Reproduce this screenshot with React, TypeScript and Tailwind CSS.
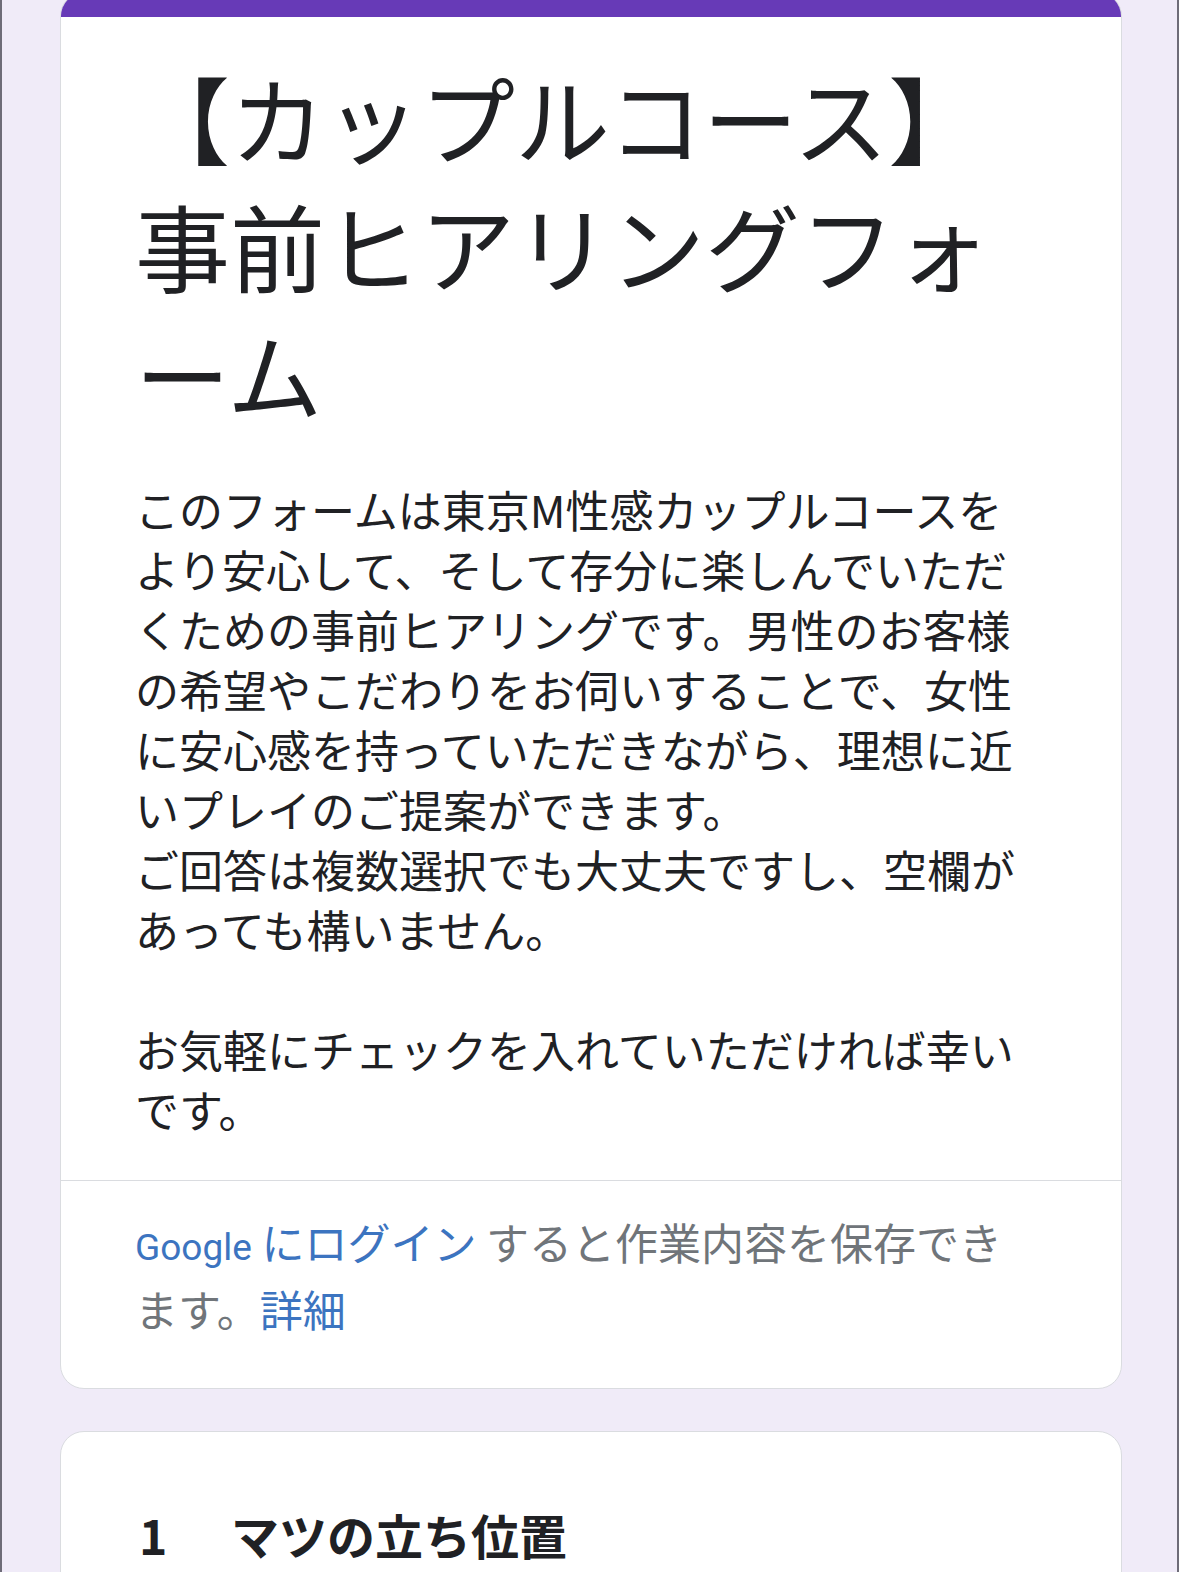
const DESCRIPTION = [
  'このフォームは東京M性感カップルコースをより安心して、そして存分に楽しんでいただくための事前ヒアリングです。男性のお客様の希望やこだわりをお伺いすることで、女性に安心感を持っていただきながら、理想に近いプレイのご提案ができます。',
  'ご回答は複数選択でも大丈夫ですし、空欄があっても構いません。',
];

export default function App() {
  return (
    <div className="min-h-screen w-full bg-[#f0ebf8] border-x-2 border-[#6e6c78] font-['Noto_Sans_CJK_JP','Noto_Sans',sans-serif] text-[#202124]">
      <div className="flex flex-col gap-[42px] pl-[58px] pr-[55px] pb-10">
        {/* Header card */}
        <div className="-mt-[8px] bg-white rounded-[24px] border border-[#dadce0] overflow-hidden">
          <div className="h-[24px] bg-[#673ab7]" />
          <div className="pt-[36px] pb-[41px] pl-[74px] pr-[91px]">
            <h1 className="text-[95px] leading-[128px] font-normal">
              【カップルコース】事前ヒアリングフォーム
            </h1>
            <div className="mt-[42px] text-[44px] leading-[60px]">
              {DESCRIPTION.map((line, idx) => (
                <p key={idx}>{line}</p>
              ))}
              <p className="mt-[60px]">
                お気軽にチェックを入れていただければ幸いです。
              </p>
            </div>
          </div>
          <div className="border-t border-[#dadce0] pt-[30px] pb-[50px] pl-[74px] pr-[91px]">
            <p className="text-[43px] leading-[60px] text-[#70757a]">
              <a className="text-[#3c74c0]" href="#">
                <span className="font-['Roboto',sans-serif] text-[37px]">Google</span> にログイン
              </a>{' '}
              すると作業内容を保存できます。
              <a className="text-[#3c74c0]" href="#">
                詳細
              </a>
            </p>
          </div>
        </div>

        {/* Question card */}
        <div className="bg-white rounded-[24px] border border-[#dadce0] pt-[72px] pb-[60px] pl-[78px] pr-[91px]">
          <h2 className="flex text-[48px] leading-[60px] font-bold">
            <span className="w-[92px]">1</span>
            <span>マツの立ち位置</span>
          </h2>
        </div>
      </div>
    </div>
  );
}
